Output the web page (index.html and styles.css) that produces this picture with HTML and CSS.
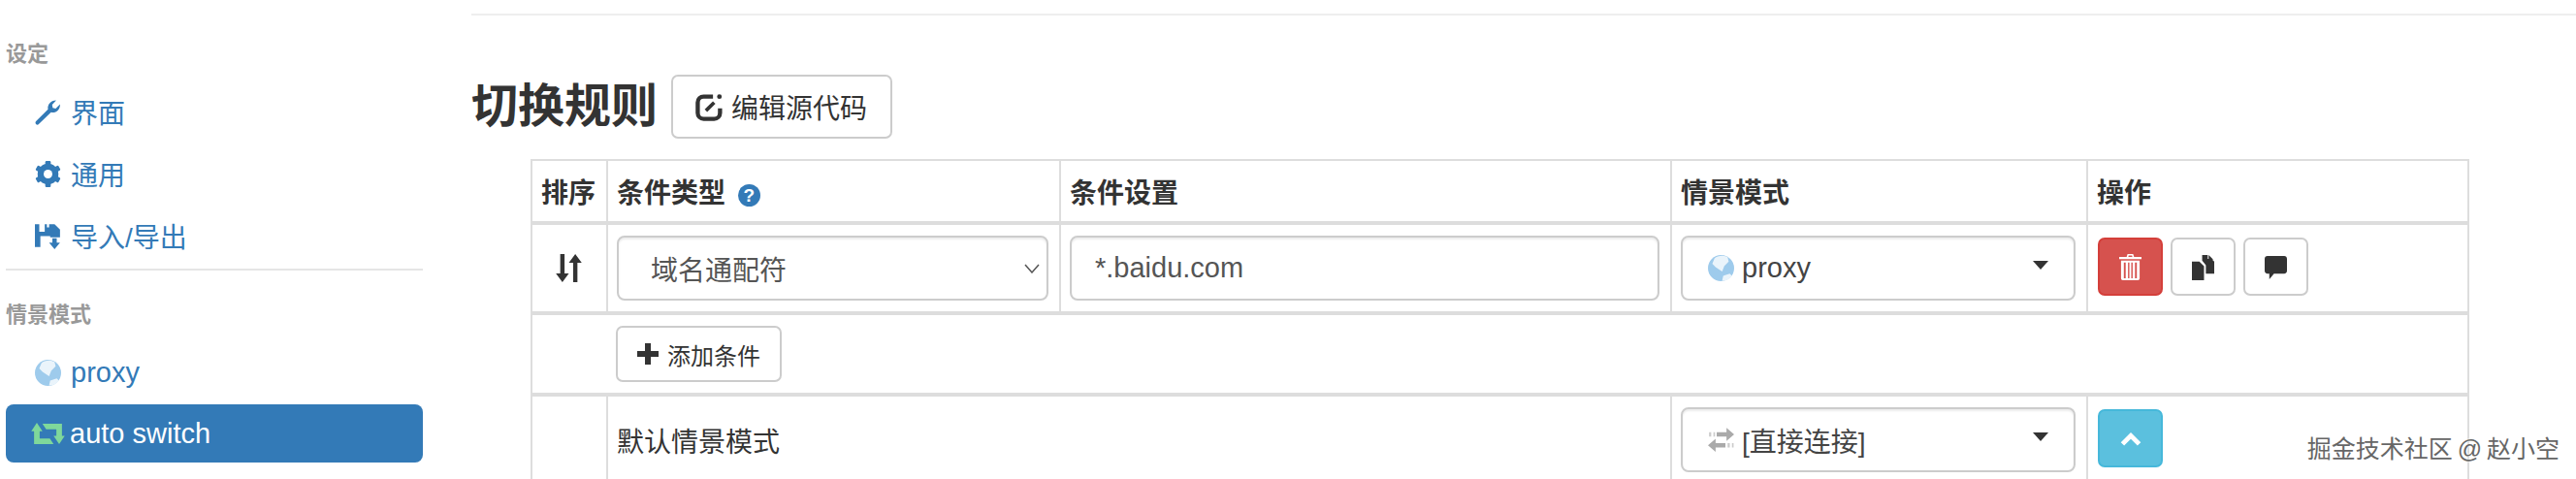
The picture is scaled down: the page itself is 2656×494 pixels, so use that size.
FILE: index.html
```html
<!DOCTYPE html>
<html lang="zh-CN">
<head>
  <meta charset="UTF-8">
  <title>切换规则</title>
  <link rel="stylesheet" href="styles.css">
</head>
<body>
  <div class="page">
    <nav class="sidebar">
      <div class="nav-header">设定</div>
      <a class="nav-item">
        <svg class="icon" viewBox="0 0 24 24"><path fill="currentColor" d="M1 20.500L12 9.500C11.200 5.500 14.500 1.200 19.500 1.300L15.800 5.300L16.300 8.200L19 8.800L23 4.800C23.400 10 18.800 13.300 14.800 12.200L3.500 23.200C2.800 23.900 1.600 23.800 1 23.200C.3 22.400.3 21.200 1 20.500Z"/></svg>
        界面
      </a>
      <a class="nav-item">
        <svg class="icon" viewBox="0 0 24 24">
          <circle cx="12" cy="12" r="6.800" fill="none" stroke="currentColor" stroke-width="5.500"/>
          <g fill="currentColor">
            <rect x="9.500" y="0" width="5" height="24" rx="1"/>
            <rect x="9.500" y="0" width="5" height="24" rx="1" transform="rotate(60 12 12)"/>
            <rect x="9.500" y="0" width="5" height="24" rx="1" transform="rotate(120 12 12)"/>
          </g>
          <circle cx="12" cy="12" r="4" fill="#fff"/>
        </svg>
        通用
      </a>
      <a class="nav-item">
        <svg class="icon" viewBox="0 0 24 24"><path fill="currentColor" d="M0 1H4V8H9V1H11V4H13V1H18L23 6V13H14V12H5V22H0ZM16 14H20V18H23L18 24L13 18H16Z"/></svg>
        导入/导出
      </a>
      <div class="nav-divider"></div>
      <div class="nav-header">情景模式</div>
      <a class="nav-item nav-item-tight">
        <svg class="icon" viewBox="0 0 24 24">
          <circle cx="12" cy="12" r="12" fill="#9ecbec"/>
          <path fill="#eaf4fb" d="M6 3C9 0 15 0 18 2L19 6L15 10L13 15L10 13L7 11L4 8ZM14 19L20 17L22 19C20 22 16 24 13 23.500Z"/>
        </svg>
        <span class="latin">proxy</span>
      </a>
      <a class="nav-item active">
        <svg class="icon-wide" viewBox="0 0 36 24"><path fill="#7fd89b" d="M6 0L12 9H9V17H20L24 23H3V9H0ZM12 1H33V14H36L30 23L24 14H27V7H16Z"/></svg>
        <span class="latin">auto switch</span>
      </a>
    </nav>

    <main class="content">
      <div class="title-row">
        <h1>切换规则</h1>
        <button class="btn btn-source">
          <svg class="icon-edit" viewBox="0 0 24 24">
            <path fill="none" stroke="#333" stroke-width="3.600" d="M15 3H7A5 5 0 0 0 2 8V17A5 5 0 0 0 7 22H16A5 5 0 0 0 21 17V13"/>
            <path fill="none" stroke="#333" stroke-width="3" d="M9 15L16 8"/>
            <circle cx="20.500" cy="3" r="2" fill="#333"/>
          </svg>
          编辑源代码
        </button>
      </div>

      <table class="rules">
        <colgroup>
          <col class="col-sort"><col class="col-type"><col class="col-value"><col class="col-profile"><col class="col-actions">
        </colgroup>
        <thead>
          <tr>
            <th>排序</th>
            <th>条件类型 <span class="help">?</span></th>
            <th>条件设置</th>
            <th>情景模式</th>
            <th>操作</th>
          </tr>
        </thead>
        <tbody>
          <tr>
            <td class="sort-cell">
              <svg class="icon-sort" viewBox="0 0 24 28"><path fill="#333" d="M4 1H8V19H12L6 27L0 19H4ZM18 1L24 9H20V27H16V9H12Z"/></svg>
            </td>
            <td>
              <div class="field select">
                域名通配符
                <svg class="chevron" viewBox="0 0 16 10"><path fill="none" stroke="#555" stroke-width="1.500" d="M1 1L8 9L15 1"/></svg>
              </div>
            </td>
            <td><div class="field input latin">*.baidu.com</div></td>
            <td>
              <div class="field dropdown">
                <svg class="icon" viewBox="0 0 24 24">
                  <circle cx="12" cy="12" r="12" fill="#9ecbec"/>
                  <path fill="#eaf4fb" d="M6 3C9 0 15 0 18 2L19 6L15 10L13 15L10 13L7 11L4 8ZM14 19L20 17L22 19C20 22 16 24 13 23.500Z"/>
                </svg>
                <span class="latin">proxy</span>
                <i class="caret"></i>
              </div>
            </td>
            <td>
              <div class="actions">
                <button class="btn btn-square btn-danger">
                  <svg class="icon-action" viewBox="0 0 24 28">
                    <path fill="#fff" d="M9 0H15L16 3H24V5.500H0V3H8ZM10.200 1.500L9.800 3H14.200L13.800 1.500Z"/>
                    <path fill="#fff" fill-rule="evenodd" d="M2 7H22V26C22 27.200 21.200 28 20 28H4C2.800 28 2 27.200 2 26ZM5 9V26H7V9ZM9.500 9V26H11V9ZM13 9V26H14.500V9ZM17 9V26H19V9Z"/>
                  </svg>
                </button>
                <button class="btn btn-square">
                  <svg class="icon-action" viewBox="0 0 24 28"><path fill="#333" d="M0 8H8L13 13V28H0ZM11 1H17V5L21 5L24 8V21H15V12L11 7ZM18 1L23 6H18Z"/></svg>
                </button>
                <button class="btn btn-square">
                  <svg class="icon-action" viewBox="0 0 24 28"><path fill="#333" d="M3 2H21C22.800 2 24 3.200 24 5V18C24 19.800 22.800 21 21 21H10L5 27V21H3C1.200 21 0 19.800 0 18V5C0 3.200 1.200 2 3 2Z"/></svg>
                </button>
              </div>
            </td>
          </tr>
        </tbody>
        <tbody>
          <tr>
            <td class="no-right"></td>
            <td colspan="4" class="no-left">
              <button class="btn btn-add">
                <svg class="icon-plus" viewBox="0 0 22 22"><path fill="#333" d="M8 0H14V8H22V14H14V22H8V14H0V8H8Z"/></svg>
                添加条件
              </button>
            </td>
          </tr>
        </tbody>
        <tbody>
          <tr>
            <td></td>
            <td colspan="2">默认情景模式</td>
            <td>
              <div class="field dropdown">
                <svg class="icon" viewBox="0 0 24 24">
                  <path fill="#aaa" d="M8 5H17V1L24 7L17 13V9H8ZM16 15V19H7V23L0 17L7 11V15Z"/>
                  <path fill="#ccc" d="M1 5H3V9H1ZM5 5H6.500V9H5ZM18 15H20V19H18ZM22 15H23.500V19H22Z"/>
                </svg>
                <span>[直接连接]</span>
                <i class="caret"></i>
              </div>
            </td>
            <td>
              <div class="actions">
                <button class="btn btn-square btn-info">
                  <svg class="icon-up" viewBox="0 0 20 14"><path fill="none" stroke="#fff" stroke-width="4.500" d="M2 12L10 4L18 12"/></svg>
                </button>
              </div>
            </td>
          </tr>
        </tbody>
      </table>
    </main>
  </div>
  <div class="watermark">掘金技术社区 @ 赵小空</div>
</body>
</html>
```

FILE: styles.css
```css
* {
  margin: 0;
  padding: 0;
  box-sizing: border-box;
}

html, body {
  height: 100%;
  overflow: hidden;
}

body {
  font-family: "Liberation Sans", "Noto Sans CJK SC", sans-serif;
  font-size: 28px;
  color: #333;
  background: #fff;
}

.latin {
  font-size: 29px;
}

.page {
  display: flex;
}

.sidebar {
  width: 430px;
  margin-left: 6px;
  flex-shrink: 0;
  padding-top: 41px;
}

.nav-header {
  height: 30px;
  margin-bottom: 14px;
  font-size: 22px;
  line-height: 30px;
  font-weight: bold;
  color: #999;
}

.nav-item {
  display: flex;
  align-items: center;
  gap: 10px;
  height: 60px;
  margin-bottom: 4px;
  padding-left: 30px;
  color: #337ab7;
  border-radius: 8px;
}

.nav-item-tight {
  margin-bottom: 3px;
}

.nav-item.active {
  gap: 5px;
  padding-left: 26px;
  background: #337ab7;
  color: #fff;
}

.nav-divider {
  height: 2px;
  margin: 1px 0 31px;
  background: #e5e5e5;
}

.icon {
  width: 27px;
  height: 27px;
  flex-shrink: 0;
}

.icon-wide {
  width: 35px;
  height: 23px;
  flex-shrink: 0;
}

.icon-edit {
  width: 29px;
  height: 29px;
  flex-shrink: 0;
}

.content {
  flex: 1;
  margin-left: 50px;
  padding-top: 14px;
}

.content::before {
  content: "";
  display: block;
  height: 2px;
  background: #eee;
}

.title-row {
  display: flex;
  align-items: center;
  gap: 14px;
  margin-top: 61px;
  margin-bottom: 21px;
}

h1 {
  font-size: 48px;
  line-height: 66px;
  font-weight: bold;
  color: #333;
}

.btn {
  display: inline-flex;
  align-items: center;
  justify-content: center;
  font-family: inherit;
  font-size: 28px;
  color: #333;
  background: #fff;
  border: 2px solid #ccc;
  border-radius: 7px;
}

.btn-source {
  gap: 8px;
  height: 66px;
  padding: 0 24px 0 23px;
}

.btn-add {
  gap: 9px;
  height: 58px;
  padding: 0 20px;
  font-size: 24px;
}

.btn-square {
  width: 67px;
  height: 60px;
}

.btn-danger {
  background: #d6524e;
  border-color: #d43f3a;
}

.btn-info {
  background: #5bc0de;
  border-color: #46b8da;
}

.rules {
  table-layout: fixed;
  width: 1997px;
  margin-left: 61px;
  border-collapse: collapse;
}

.col-sort { width: 78px; }
.col-type { width: 467px; }
.col-value { width: 630px; }
.col-profile { width: 429px; }
.col-actions { width: 393px; }

.rules th,
.rules td {
  padding: 11px 11px 11px 9px;
  border: 2px solid #ddd;
  text-align: left;
  vertical-align: middle;
}

.rules th {
  height: 65px;
  font-weight: bold;
}

.rules thead th {
  border-bottom-width: 4px;
}

.rules tbody td {
  border-bottom-width: 4px;
}

.rules .no-right {
  border-right: 0;
}

.rules .no-left {
  border-left: 0;
}

.sort-cell {
  text-align: center;
}

.icon-sort {
  display: block;
  width: 27px;
  height: 31px;
  margin: 0 auto;
}

.help {
  display: inline-flex;
  align-items: center;
  justify-content: center;
  width: 23px;
  height: 23px;
  margin-left: 5px;
  border-radius: 50%;
  background: #337ab7;
  color: #fff;
  font-size: 19px;
  line-height: 1;
  vertical-align: 1px;
}

.field {
  display: flex;
  align-items: center;
  height: 67px;
  color: #555;
  background: #fff;
  border: 2px solid #ccc;
  border-radius: 8px;
  box-shadow: inset 0 2px 2px rgba(0, 0, 0, 0.075);
}

.select {
  justify-content: space-between;
  padding: 0 7px 0 33px;
}

.chevron {
  width: 16px;
  height: 10px;
}

.input {
  padding-left: 24px;
}

.dropdown {
  gap: 8px;
  padding: 0 26px;
  color: #444;
}

.caret {
  width: 0;
  height: 0;
  margin-left: auto;
  margin-top: -6px;
  border-top: 9px solid #333;
  border-left: 8px solid transparent;
  border-right: 8px solid transparent;
}

.actions {
  display: flex;
  gap: 8px;
  margin: 2px 0 5px 1px;
}

.icon-action {
  width: 23px;
  height: 27px;
}

.icon-plus {
  width: 22px;
  height: 22px;
}

.icon-up {
  width: 22px;
  height: 15px;
}

.watermark {
  position: absolute;
  right: 17px;
  top: 445px;
  font-size: 25px;
  line-height: 36px;
  word-spacing: -2px;
  color: #666;
  text-shadow: 0 0 2px #fff, 0 0 2px #fff;
}
```
